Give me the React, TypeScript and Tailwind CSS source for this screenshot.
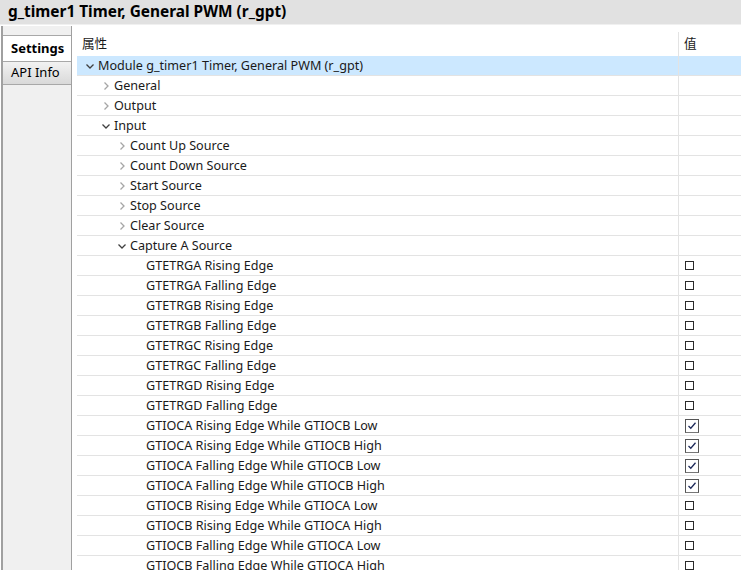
import React from 'react'

type Row = {
  label: string
  level: number
  kind: 'open' | 'closed' | 'leaf'
  check?: boolean
  selected?: boolean
}

const rows: Row[] = [
  { label: 'Module g_timer1 Timer, General PWM (r_gpt)', level: 0, kind: 'open', selected: true },
  { label: 'General', level: 1, kind: 'closed' },
  { label: 'Output', level: 1, kind: 'closed' },
  { label: 'Input', level: 1, kind: 'open' },
  { label: 'Count Up Source', level: 2, kind: 'closed' },
  { label: 'Count Down Source', level: 2, kind: 'closed' },
  { label: 'Start Source', level: 2, kind: 'closed' },
  { label: 'Stop Source', level: 2, kind: 'closed' },
  { label: 'Clear Source', level: 2, kind: 'closed' },
  { label: 'Capture A Source', level: 2, kind: 'open' },
  { label: 'GTETRGA Rising Edge', level: 3, kind: 'leaf', check: false },
  { label: 'GTETRGA Falling Edge', level: 3, kind: 'leaf', check: false },
  { label: 'GTETRGB Rising Edge', level: 3, kind: 'leaf', check: false },
  { label: 'GTETRGB Falling Edge', level: 3, kind: 'leaf', check: false },
  { label: 'GTETRGC Rising Edge', level: 3, kind: 'leaf', check: false },
  { label: 'GTETRGC Falling Edge', level: 3, kind: 'leaf', check: false },
  { label: 'GTETRGD Rising Edge', level: 3, kind: 'leaf', check: false },
  { label: 'GTETRGD Falling Edge', level: 3, kind: 'leaf', check: false },
  { label: 'GTIOCA Rising Edge While GTIOCB Low', level: 3, kind: 'leaf', check: true },
  { label: 'GTIOCA Rising Edge While GTIOCB High', level: 3, kind: 'leaf', check: true },
  { label: 'GTIOCA Falling Edge While GTIOCB Low', level: 3, kind: 'leaf', check: true },
  { label: 'GTIOCA Falling Edge While GTIOCB High', level: 3, kind: 'leaf', check: true },
  { label: 'GTIOCB Rising Edge While GTIOCA Low', level: 3, kind: 'leaf', check: false },
  { label: 'GTIOCB Rising Edge While GTIOCA High', level: 3, kind: 'leaf', check: false },
  { label: 'GTIOCB Falling Edge While GTIOCA Low', level: 3, kind: 'leaf', check: false },
  { label: 'GTIOCB Falling Edge While GTIOCA High', level: 3, kind: 'leaf', check: false },
]

const indents = ['pl-[7px]', 'pl-[23px]', 'pl-[39px]', 'pl-[55px]']

const Chevron = ({ open }: { open: boolean }) => (
  <svg width="12" height="12" viewBox="0 0 12 12" className="shrink-0">
    {open ? (
      <path d="M2.5 4.5 L6 8 L9.5 4.5" fill="none" stroke="#404040" strokeWidth="1.3" />
    ) : (
      <path d="M4.5 2.5 L8 6 L4.5 9.5" fill="none" stroke="#a6a6a6" strokeWidth="1.3" />
    )}
  </svg>
)

const CheckBox = ({ on }: { on: boolean }) =>
  on ? (
    <div className="w-[14px] h-[14px] border border-[#555] border-b-[#777] bg-white flex items-center justify-center">
      <svg width="10" height="9" viewBox="0 0 10 9">
        <path d="M1.5 5 L3.8 7.2 L8.5 1.8" fill="none" stroke="#1e2a5a" strokeWidth="1.3" />
      </svg>
    </div>
  ) : (
    <div className="w-[9px] h-[9px] border border-[#2a2a2a] bg-white" />
  )

const App = () => {
  return (
    <div className="w-[741px] h-[570px] overflow-hidden bg-white text-[12.6px] text-[#1a1a1a] font-['Noto_Sans','Noto_Sans_CJK_SC',sans-serif]">
      <header className="h-[25px] bg-[#e1e1e1] border-b border-[#f0f0f0] flex items-center px-[8px]">
        <span className="text-[15.4px] font-bold text-black">g_timer1 Timer, General PWM (r_gpt)</span>
      </header>
      <div className="flex h-[545px] mt-px overflow-hidden">
        <div className="ml-px w-[71px] shrink-0 border-l-2 border-r border-[#a0a0a0] bg-[#f0f0f0] flex flex-col">
          <div className="h-[10px] border-b border-[#a8a8a8]" />
          <div className="h-[25px] bg-white flex items-center pl-[8px] font-bold text-[13px] text-black">Settings</div>
          <div className="h-[24px] border-y border-[#a8a8a8] bg-gradient-to-b from-[#f2f2f2] to-[#d9d9d9] flex items-center pl-[8px] text-[13px] text-black">
            API Info
          </div>
        </div>
        <div className="flex-1 ml-[5px] pt-[6px] flex flex-col">
          <div className="flex h-[24px] shrink-0">
            <div className="w-[601px] flex items-center pl-[5px] pt-px">属性</div>
            <div className="flex-1 border-l border-[#e3e3e3] flex items-center pl-[5px] pt-px">值</div>
          </div>
          {rows.map((r, i) => (
            <div
              key={i}
              className={`flex h-[20px] shrink-0 border-b border-[#e3e3e3] ${r.selected ? 'bg-[#cce8ff]' : ''}`}
            >
              <div className={`w-[601px] flex items-center gap-[2px] pt-px whitespace-nowrap ${indents[r.level]}`}>
                {r.kind === 'leaf' ? <span className="w-[12px]" /> : <Chevron open={r.kind === 'open'} />}
                <span>{r.label}</span>
              </div>
              <div className="flex-1 border-l border-[#e3e3e3] flex items-center pl-[6px]">
                {r.check !== undefined && <CheckBox on={r.check} />}
              </div>
            </div>
          ))}
        </div>
      </div>
    </div>
  )
}

export default App
